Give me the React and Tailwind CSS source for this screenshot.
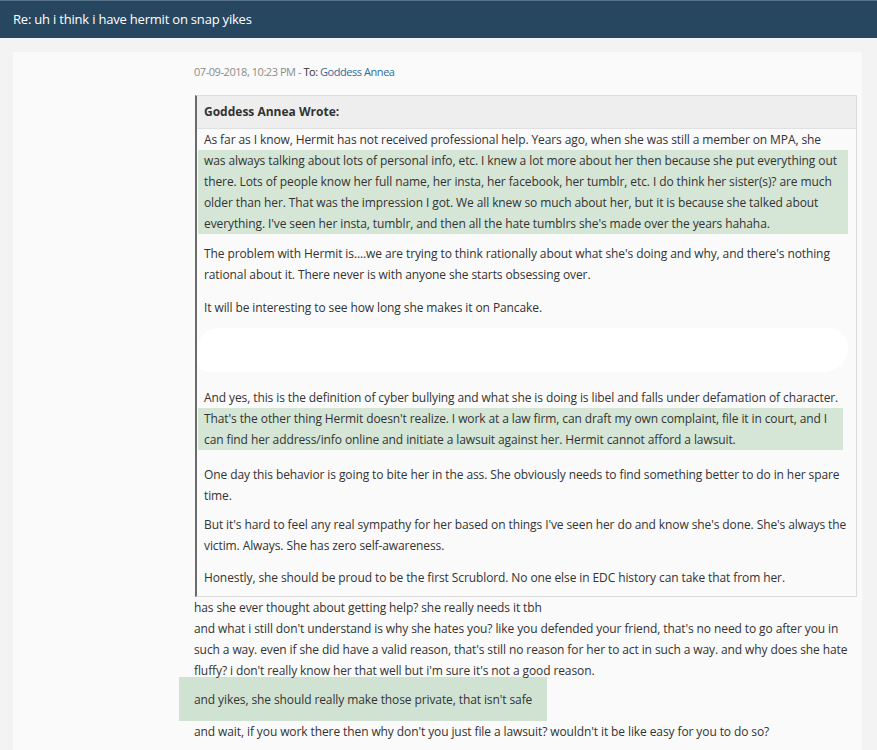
import React from 'react';

// gap above each paragraph of the quoted post, in px
const quoteParagraphs = [
  {
    gap: 'mt-0',
    lines: [
      'As far as I know, Hermit has not received professional help. Years ago, when she was still a member on MPA, she',
    ],
    marked: [
      'was always talking about lots of personal info, etc. I knew a lot more about her then because she put everything out',
      'there. Lots of people know her full name, her insta, her facebook, her tumblr, etc. I do think her sister(s)? are much',
      'older than her. That was the impression I got. We all knew so much about her, but it is because she talked about',
      "everything. I've seen her insta, tumblr, and then all the hate tumblrs she's made over the years hahaha.",
    ],
  },
  {
    gap: 'mt-[9px]',
    lines: [
      "The problem with Hermit is....we are trying to think rationally about what she's doing and why, and there's nothing",
      'rational about it. There never is with anyone she starts obsessing over.',
    ],
  },
  {
    gap: 'mt-[12px]',
    lines: ['It will be interesting to see how long she makes it on Pancake.'],
    blank: true,
  },
  {
    gap: 'mt-0',
    lines: [
      'And yes, this is the definition of cyber bullying and what she is doing is libel and falls under defamation of character.',
    ],
    marked: [
      "That's the other thing Hermit doesn't realize. I work at a law firm, can draft my own complaint, file it in court, and I",
      'can find her address/info online and initiate a lawsuit against her. Hermit cannot afford a lawsuit.',
    ],
    narrow: true,
  },
  {
    gap: 'mt-[14px]',
    lines: [
      'One day this behavior is going to bite her in the ass. She obviously needs to find something better to do in her spare',
      'time.',
    ],
  },
  {
    gap: 'mt-[8px]',
    lines: [
      "But it's hard to feel any real sympathy for her based on things I've seen her do and know she's done. She's always the",
      'victim. Always. She has zero self-awareness.',
    ],
  },
  {
    gap: 'mt-[11px]',
    lines: ['Honestly, she should be proud to be the first Scrublord. No one else in EDC history can take that from her.'],
  },
];

const replyLines = [
  'has she ever thought about getting help? she really needs it tbh',
  "and what i still don't understand is why she hates you? like you defended your friend, that's no need to go after you in",
  "such a way. even if she did have a valid reason, that's still no reason for her to act in such a way. and why does she hate",
  "fluffy? i don't really know her that well but i'm sure it's not a good reason.",
];

function Line({ children }) {
  return <span className="block whitespace-nowrap">{children}</span>;
}

function Quote() {
  return (
    <div className="border border-[#dcdcdc] border-l-2 border-l-[#6b6b6b] bg-[#fafafa]">
      <div className="h-[33px] flex items-center px-[7px] bg-[#eeeeee] border-b border-[#e0e0e0] font-bold text-[12px] text-[#333]">
        Goddess Annea Wrote:
      </div>
      <div className="pl-[7px] pr-[8px] pb-[8px] text-[12px] leading-[21px] tracking-[-0.1px] text-[#333]">
        {quoteParagraphs.map((p, i) => (
          <div key={i} className={p.gap}>
            {p.lines.map((l, j) => (
              <Line key={j}>{l}</Line>
            ))}
            {p.marked && (
              <div className={`-ml-[6px] pl-[6px] bg-[#d5e6d7] ${p.narrow ? 'mr-[5px]' : ''}`}>
                {p.marked.map((l, j) => (
                  <Line key={j}>{l}</Line>
                ))}
              </div>
            )}
            {p.blank && (
              <div className="h-[69px] flex items-center">
                <div className="-ml-[7px] mt-[-6px] h-[44px] w-[655px] rounded-tl-[30px] rounded-bl-[18px] rounded-tr-[26px] rounded-br-[34px] bg-white" />
              </div>
            )}
          </div>
        ))}
      </div>
    </div>
  );
}

export default function App() {
  return (
    <div className="min-h-screen bg-[#f3f3f3] font-['Open_Sans',sans-serif]">
      <div className="h-[38px] flex items-center px-[13px] bg-[#274760] border-t border-[#56738b] text-[13px] tracking-[-0.2px] text-white">
        Re: uh i think i have hermit on snap yikes
      </div>

      <div className="pt-[14px] pl-[13px] pr-[15px]">
        <div className="bg-[#fafafa] pl-[181px] pr-[5px] pt-[10px]">
          <div className="h-[20px] flex items-center whitespace-pre text-[11px] tracking-[-0.45px]">
            <span className="text-[#8c8c8c]">07-09-2018, 10:23 PM - </span>
            <span className="text-[#333]">To: </span>
            <span className="text-[#2f6c9c]">Goddess Annea</span>
          </div>

          <div className="mt-[13px] ml-[1px]">
            <Quote />
          </div>

          <div className="text-[12px] leading-[21px] tracking-[-0.1px] text-[#333]">
            {replyLines.map((l, i) => (
              <Line key={i}>{l}</Line>
            ))}
            <div className="-ml-[15px] -mt-[4px] w-[368px] h-[44px] flex items-center pl-[15px] bg-[#d0e3d3]">
              and yikes, she should really make those private, that isn't safe
            </div>
            <div className="pb-[20px]">
              <Line>and wait, if you work there then why don't you just file a lawsuit? wouldn't it be like easy for you to do so?</Line>
            </div>
          </div>
        </div>
      </div>
    </div>
  );
}
